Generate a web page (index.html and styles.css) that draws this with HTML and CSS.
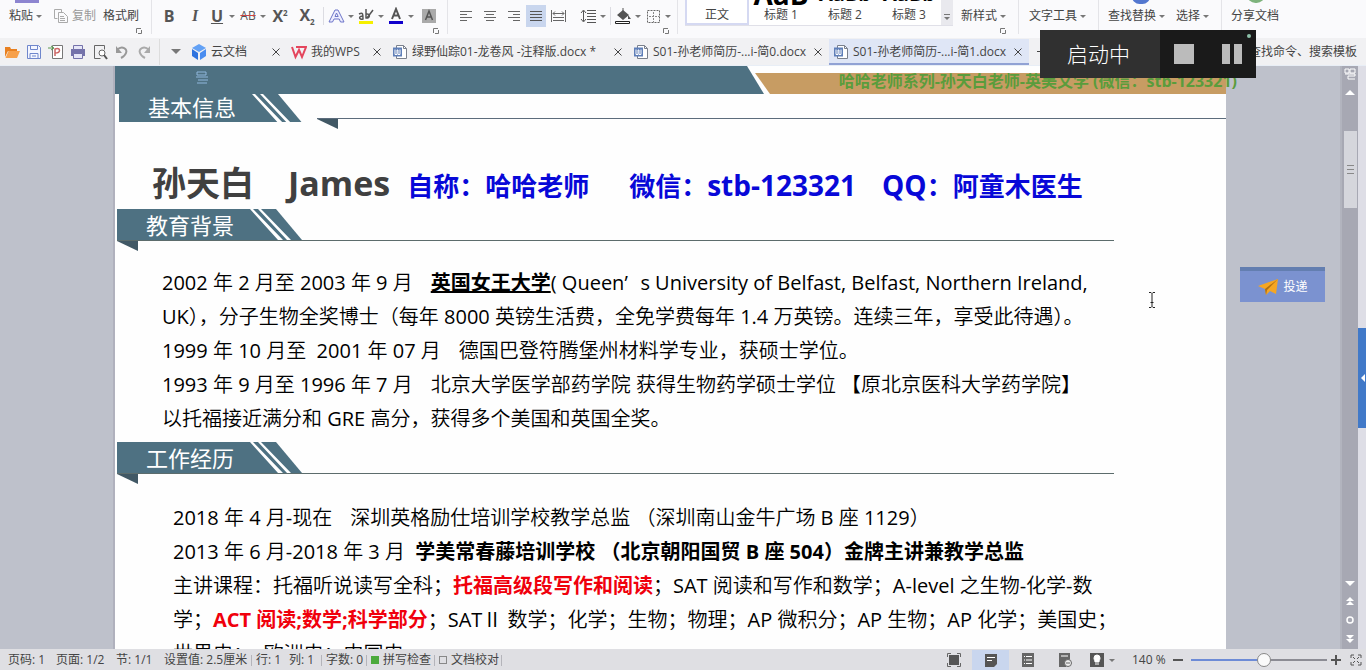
FILE: index.html
```
<!DOCTYPE html>
<html lang="zh-CN">
<head>
<meta charset="utf-8">
<title>S01-孙老师简历</title>
<link rel="stylesheet" href="styles.css">
</head>
<body>
<svg class="defs" aria-hidden="true">
  <symbol id="doc" viewBox="0 0 16 16"><path d="M4.500 1.500h7l3 3v10h-10z" fill="#fff" stroke="#7a808c"/><path d="M11.500 1.500v3h3" fill="none" stroke="#7a808c"/><path d="M1 3.500h9v9H1z" fill="#5f7fb8"/><path d="M3 5.500v5h2V6h1v4.500h2v-5" fill="none" stroke="#fff"/></symbol>
  <symbol id="close" viewBox="0 0 10 10"><path d="M1.500 1.500l7 7M8.500 1.500l-7 7" stroke="#444" fill="none"/></symbol>
  <symbol id="launch" viewBox="0 0 6 6"><path d="M.5 5V.5H5M5.500 2v3.500H2" stroke="#777" fill="none"/></symbol>
  <symbol id="flag" viewBox="0 0 186 31"><path d="M0 0h159l26 31H0z" fill="#4e7182"/><path d="M133 0h3l30 31h-5zM141 0h3l30 31h-4z" fill="#fff"/></symbol>
</svg>
<div class="app">
  <header class="ribbon">
    <div class="group clip">
      <div class="row">
        <button class="tool above purple">粘贴<i class="caret"></i></button>
        <button class="tool dim"><svg width="16" height="16" viewBox="0 0 16 16"><path d="M1.500 1.500h7v3M1.500 1.500v9h3M5.500 4.500h5l4 4v6h-9z M7 8.500h4M7 10.500h5M7 12.500h5" fill="none" stroke="#aaa"/></svg>复制</button>
        <button class="tool">格式刷</button>
      </div>
      <svg class="launch"><use href="#launch"/></svg>
    </div>
    <div class="group font">
      <div class="row">
        <button class="tool" aria-label="加粗"><b class="glyph">B</b></button>
        <button class="tool" aria-label="倾斜"><em class="glyph serif">I</em></button>
        <button class="tool" aria-label="下划线"><u class="glyph">U</u><i class="caret"></i></button>
        <button class="tool" aria-label="删除线"><s class="glyph small">AB</s><i class="caret"></i></button>
        <button class="tool" aria-label="上标"><span class="glyph">X<sup>2</sup></span></button>
        <button class="tool" aria-label="下标"><span class="glyph">X<sub>2</sub></span></button>
        <span class="sep"></span>
        <button class="tool" aria-label="文字效果"><svg width="20" height="18" viewBox="0 0 20 18"><path d="M3 15L9 3h3l6 12h-3.500l-1.300-3H8l-1.500 3zM9 9.500h3.200L10.500 6z" fill="#eef" stroke="#6c74c8"/></svg><i class="caret"></i></button>
        <button class="tool" aria-label="突出显示"><svg width="20" height="18" viewBox="0 0 20 18"><path d="M3 14h14v3H3z" fill="#f6f000"/><path d="M3 7c4-2 4 0 4 5-4 1-5-3 0-3M10 2v9c4 1 5-5 0-4M17 3l-6 8" fill="none" stroke="#555" stroke-width="1.500"/></svg><i class="caret"></i></button>
        <button class="tool" aria-label="字体颜色"><svg width="20" height="18" viewBox="0 0 20 18"><path d="M3 14h14v3H3z" fill="#10c"/><path d="M6 12l4-10 4 10M7.500 8.500h5" fill="none" stroke="#555" stroke-width="2"/></svg><i class="caret"></i></button>
        <button class="tool" aria-label="字符底纹"><svg width="20" height="18" viewBox="0 0 20 18"><path d="M3 2h14v14H3z" fill="#aaa"/><path d="M6.500 13l3.500-9 3.500 9M8 10h4" fill="none" stroke="#555" stroke-width="1.500"/></svg></button>
      </div>
      <svg class="launch"><use href="#launch"/></svg>
    </div>
    <div class="group para">
      <div class="row">
        <button class="tool" aria-label="左对齐"><svg width="20" height="18" viewBox="0 0 20 18"><path d="M4 4.500h12M4 7.500h7M4 10.500h12M4 13.500h7" stroke="#666"/></svg></button>
        <button class="tool" aria-label="居中"><svg width="20" height="18" viewBox="0 0 20 18"><path d="M4 4.500h12M6 7.500h8M4 10.500h12M6 13.500h8" stroke="#666"/></svg></button>
        <button class="tool" aria-label="右对齐"><svg width="20" height="18" viewBox="0 0 20 18"><path d="M4 4.500h12M9 7.500h7M4 10.500h12M9 13.500h7" stroke="#666"/></svg></button>
        <button class="tool on" aria-label="两端对齐"><svg width="20" height="18" viewBox="0 0 20 18"><path d="M4 4.500h12M4 7.500h12M4 10.500h12M4 13.500h12" stroke="#555"/></svg></button>
        <button class="tool" aria-label="分散对齐"><svg width="20" height="18" viewBox="0 0 20 18"><path d="M3.500 3v12M17.500 3v12M5 10.500h11M5 13.500h11M5 6.500h11M7 4.500l-2 2 2 2M14 4.500l2 2-2 2" stroke="#666" fill="none"/></svg></button>
        <button class="tool" aria-label="行距"><svg width="20" height="18" viewBox="0 0 20 18"><path d="M9 3.500h9M9 6.500h9M9 9.500h9M9 12.500h9M9 15.500h9M5.500 4v10M3 6l2.500-3L8 6M3 12l2.500 3L8 12" stroke="#555" fill="none"/></svg><i class="caret"></i></button>
        <span class="sep"></span>
        <button class="tool" aria-label="底纹颜色"><svg width="20" height="18" viewBox="0 0 20 18"><path d="M2.500 14.500h14v2h-14z" fill="#fff" stroke="#222"/><path d="M4 8l6-5 6 5-6 5zM15 8l3 4h-3z" fill="#555"/><path d="M10 1v5" stroke="#555"/></svg><i class="caret"></i></button>
        <button class="tool" aria-label="边框"><svg width="20" height="18" viewBox="0 0 20 18"><path d="M4.500 3.500h12v12h-12z" fill="none" stroke="#666" stroke-dasharray="2 1"/><path d="M10.500 5v10M6 9.500h10" stroke="#888" stroke-dasharray="2 1"/></svg><i class="caret"></i></button>
      </div>
      <svg class="launch"><use href="#launch"/></svg>
    </div>
    <div class="group styles">
      <div class="gallery">
        <button class="style chosen"><span>正文</span></button>
        <button class="style"><b class="big">AaB</b><span>标题 1</span></button>
        <button class="style"><b>AaBb</b><span>标题 2</span></button>
        <button class="style"><b>AaBb</b><span>标题 3</span></button>
        <button class="more" aria-label="更多样式"><i class="line"></i><i class="caret"></i></button>
      </div>
      <div class="newstyle">
        <button class="tool">新样式<i class="caret"></i></button>
        <svg class="launch"><use href="#launch"/></svg>
      </div>
    </div>
    <div class="group words"><div class="row"><button class="tool">文字工具<i class="caret"></i></button></div></div>
    <div class="group find"><div class="row">
      <button class="tool above blue">查找替换<i class="caret"></i></button>
      <button class="tool">选择<i class="caret"></i></button>
    </div></div>
    <div class="group share"><div class="row"><button class="tool above green">分享文档</button></div></div>
  </header>

  <nav class="tabs">
    <div class="quick">
      <button aria-label="打开"><svg width="16" height="16" viewBox="0 0 16 16"><path d="M1 3h5l1 2h6v2H4l-3 6z" fill="#e88020"/><path d="M4.500 7H16l-3 7H1.500z" fill="#f7a04a"/></svg></button>
      <button aria-label="保存"><svg width="16" height="16" viewBox="0 0 16 16"><path d="M1.500 1.500h11l2 2v11h-13z" fill="#f4f6ff" stroke="#6f86cc"/><path d="M4.500 1.500v4h7v-4M4 14V9.500h8V14M6 12h4" fill="none" stroke="#6f86cc"/></svg></button>
      <button aria-label="输出为PDF"><svg width="16" height="16" viewBox="0 0 16 16"><path d="M4.500 1.500h10v13h-10z" fill="#fff" stroke="#777"/><path d="M0 4h5M3 2l3 2-3 2" stroke="#5c9a50" fill="none"/><path d="M7 12V5c6-2 6 4 0 4" stroke="#c66" fill="none" stroke-width="1.500"/></svg></button>
      <button aria-label="打印"><svg width="16" height="16" viewBox="0 0 16 16"><path d="M1 5h14v7H1z" fill="#7472aa"/><path d="M3.500 1.500h9v4h-9zM3.500 9.500h9v5h-9z" fill="#e6e6f7" stroke="#7472aa"/></svg></button>
      <button aria-label="打印预览"><svg width="16" height="16" viewBox="0 0 16 16"><path d="M2.500 1.500h10v4M2.500 1.500v13h6" fill="none" stroke="#666"/><circle cx="10" cy="9" r="3" fill="#fff" stroke="#666"/><path d="M12 11l3 4" stroke="#555" stroke-width="2"/></svg></button>
      <button aria-label="撤销"><svg width="16" height="16" viewBox="0 0 16 16"><path d="M3 6c5-5 11-1 9 3-1 3-3 4-5 5" fill="none" stroke="#999" stroke-width="2"/><path d="M2 2v7h6z" fill="#999"/></svg></button>
      <button aria-label="恢复"><svg width="16" height="16" viewBox="0 0 16 16"><path d="M13 6C8 1 2 5 4 9c1 3 3 4 5 5" fill="none" stroke="#aaa" stroke-width="2"/><path d="M14 2v7H8z" fill="#aaa"/></svg></button>
    </div>
    <button class="drop" aria-label="自定义"><i class="caret wide"></i></button>
    <div class="tab cloud"><svg class="ic" viewBox="0 0 16 16"><path d="M8 0l7 4-7 4-7-4z" fill="#62a1f5"/><path d="M1 5l6 4v7l-6-4z" fill="#2f74df"/><path d="M15 5L9 9v7l6-4z" fill="#4a8df0"/></svg><a href="#">云文档</a><button aria-label="关闭"><svg><use href="#close"/></svg></button></div>
    <div class="tab wps"><svg class="ic" viewBox="0 0 16 16"><path d="M1 3l3.500 10L8 6l3 7 4-10H5" fill="none" stroke="#e4455c" stroke-width="2"/></svg><a href="#">我的WPS</a><button aria-label="关闭"><svg><use href="#close"/></svg></button></div>
    <div class="tab long"><svg class="ic"><use href="#doc"/></svg><a href="#">绿野仙踪01-龙卷风 -注释版.docx *</a><button aria-label="关闭"><svg><use href="#close"/></svg></button></div>
    <div class="tab file"><svg class="ic"><use href="#doc"/></svg><a href="#">S01-孙老师简历-...i-简0.docx</a><button aria-label="关闭"><svg><use href="#close"/></svg></button></div>
    <div class="tab file active"><svg class="ic"><use href="#doc"/></svg><a href="#">S01-孙老师简历-...i-简1.docx</a><button aria-label="关闭"><svg><use href="#close"/></svg></button></div>
    <button class="plus" aria-label="新建"><svg width="10" height="10" viewBox="0 0 10 10"><path d="M0 5.500h10M5.500 1v9" stroke="#444"/></svg></button>
    <input class="search" aria-label="搜索" value="查找命令、搜索模板">
  </nav>

  <main class="work">
    <article class="page">
      <div class="banner">
        <svg class="left" viewBox="0 0 652 28"><path d="M0 0h632l17 28H0z" fill="#4e7182"/></svg>
        <div class="tan"></div>
        <svg class="anchor" viewBox="0 0 14 14"><path d="M2 1h9v3H2zM1 6h12M3 9h10M2 12h10" fill="none" stroke="#8fb8dc"/></svg>
      </div>
      <div class="head first"><h2><svg><use href="#flag"/></svg><span>基本信息</span></h2><div class="rule"><i class="fold"></i></div></div>
      <h1><span class="cn">孙天白</span><span class="en">James</span><span class="c1">自称：哈哈老师</span><span class="c2">微信：<span class="latin">stb-123321</span></span><span class="c3"><span class="latin">QQ</span>：阿童木医生</span></h1>
      <div class="head"><h2><svg><use href="#flag"/></svg><span>教育背景</span></h2></div>
      <i class="fold"></i>
      <div class="text edu">
        <p>2002 年 2 月至 2003 年 9 月<span class="gap"></span><b><u>英国女王大学</u></b>( Queen<span class="quo">’</span>s University of Belfast, Belfast, Northern Ireland,</p>
        <p>UK），分子生物全奖博士（每年 8000 英镑生活费，全免学费每年 1.4 万英镑。连续三年，享受此待遇）。</p>
        <p>1999 年 10 月至  2001 年 07 月<span class="gap"></span>德国巴登符腾堡州材料学专业，获硕士学位。</p>
        <p>1993 年 9 月至 1996 年 7 月<span class="gap"></span>北京大学医学部药学院 获得生物药学硕士学位 【原北京医科大学药学院】</p>
        <p>以托福接近满分和 GRE 高分，获得多个美国和英国全奖。</p>
      </div>
      <div class="head"><h2><svg><use href="#flag"/></svg><span>工作经历</span></h2></div>
      <i class="fold"></i>
      <div class="text job">
        <p>2018 年 4 月-现在<span class="gap"></span>深圳英格励仕培训学校教学总监 （深圳南山金牛广场 B 座 1129）</p>
        <p>2013 年 6 月-2018 年 3 月  <b>学美常春藤培训学校 （北京朝阳国贸 B 座 504）金牌主讲兼教学总监</b></p>
        <p>主讲课程：托福听说读写全科；<b class="red">托福高级段写作和阅读</b>；SAT 阅读和写作和数学；A-level 之生物-化学-数</p>
        <p>学；<b class="red">ACT 阅读;数学;科学部分</b>；SATⅡ 数学；化学；生物；物理；AP 微积分；AP 生物；AP 化学；美国史；</p>
        <p>世界史；  欧洲史；中国史</p>
      </div>
    </article>
    <div class="mark">哈哈老师系列-孙天白老师-英美文学 (微信：stb-123321)</div>
    <button class="send"><svg width="22" height="18" viewBox="0 0 22 18"><path d="M1 8L21 1l-2 15-6-3-4 4-1-6z" fill="#f5a623"/><path d="M21 1L8 11l1 6 1-5z" fill="#b06f10"/></svg>投递</button>
    <svg class="cursor" viewBox="0 0 8 16"><path d="M1 .5h2l1 1 1-1h2M4 1.500v13M1 15.500h2l1-1 1 1h2M2.500 10.500h3" stroke="#222" fill="none"/></svg>
    <div class="scroll">
      <svg width="12" height="12" viewBox="0 0 12 12"><path d="M1 1h4v4H1zM6 1h5v4H6zM1 6h10v2H4v3h7" fill="none" stroke="#fff"/></svg>
      <svg class="up" width="10" height="6" viewBox="0 0 10 6"><path d="M0 6l5-5 5 5z" fill="#fff"/></svg>
      <div class="thumb"><i></i><i></i><i></i></div>
      <div class="ends">
        <svg width="10" height="6" viewBox="0 0 10 6"><path d="M0 0l5 5 5-5z" fill="#fff"/></svg>
        <svg width="10" height="10" viewBox="0 0 10 10"><path d="M1 5l4-4 4 4zM1 9l4-4 4 4z" fill="#fff"/></svg>
        <svg width="10" height="10" viewBox="0 0 10 10"><circle cx="5" cy="5" r="3" fill="none" stroke="#fff" stroke-width="1.500"/></svg>
        <svg width="10" height="10" viewBox="0 0 10 10"><path d="M1 1l4 4 4-4zM1 5l4 4 4-4z" fill="#fff"/></svg>
      </div>
    </div>
    <aside class="side"><button aria-label="展开"><svg width="5" height="8" viewBox="0 0 5 8"><path d="M5 0L1 4l4 4z" fill="#fff"/></svg></button></aside>
  </main>

  <footer class="status">
    <span class="s1">页码: 1</span><span class="s2">页面: 1/2</span><span class="s3">节: 1/1</span><span class="s4">设置值: 2.5厘米</span><span class="s5 bar">行: 1</span><span class="s6">列: 1</span><span class="s7 bar">字数: 0</span><span class="s8 bar"><i class="sq"></i>拼写检查</span><span class="s9 bar"><i class="sq open"></i>文档校对</span><span class="bar end"></span>
    <div class="views">
      <button aria-label="全屏"><svg width="16" height="16" viewBox="0 0 16 16"><path d="M1.500 5V1.500H5M11 1.500h3.500V5M14.500 11v3.500H11M5 14.500H1.500V11" fill="none" stroke="#666"/><path d="M3 3h10v10H3z" fill="#555"/></svg></button>
      <button class="on" aria-label="页面视图"><svg width="16" height="16" viewBox="0 0 16 16"><path d="M2 2h12v10l-3 3H2z" fill="#555"/><path d="M4 5.500h8M4 8.500h5" stroke="#fff"/></svg></button>
      <button aria-label="大纲"><svg width="16" height="16" viewBox="0 0 16 16"><path d="M2 1h12v14H2z" fill="#666"/><path d="M4 4.500h1M6 4.500h6M4 8h1M6 8h6M4 11.500h1M6 11.500h6" stroke="#fff"/></svg></button>
      <button aria-label="Web 版式"><svg width="16" height="16" viewBox="0 0 16 16"><path d="M2 1h11v6l-4 8H2z" fill="#666"/><path d="M4 4h7" stroke="#fff"/><circle cx="11" cy="11" r="3.500" fill="#eee" stroke="#666"/><path d="M9 11h4" stroke="#666"/></svg></button>
      <button aria-label="护眼模式"><svg width="16" height="16" viewBox="0 0 16 16"><path d="M1 1h14v14H1z" fill="#555"/><path d="M5 6a3 3 0 1 1 6 0c0 2-1 2-1 4H6c0-2-1-2-1-4zM6 12h4" fill="#fff" stroke="#fff"/></svg><i class="caret"></i></button>
    </div>
    <label class="pct" for="zoom">140 %</label>
    <button class="step" aria-label="缩小"><svg width="10" height="10" viewBox="0 0 10 10"><path d="M0 5h10" stroke="#555" stroke-width="2"/></svg></button>
    <input id="zoom" type="range" min="0" max="100" value="54">
    <button class="step" aria-label="放大"><svg width="10" height="10" viewBox="0 0 10 10"><path d="M0 5h10M5 0v10" stroke="#555" stroke-width="2"/></svg></button>
    <button class="step" aria-label="适应"><svg width="12" height="12" viewBox="0 0 12 12"><path d="M1 4V1h3M8 1h3v3M11 8v3H8M4 11H1V8M3 3l2 2M9 3L7 5M3 9l2-2M9 9L7 7" fill="none" stroke="#555"/></svg></button>
  </footer>
</div>
<div class="recorder"><span>启动中</span><div><button aria-label="停止"><svg width="20" height="20"><path d="M0 0h20v20H0z" fill="#bbb"/></svg></button><button aria-label="暂停"><svg width="20" height="20"><path d="M0 0h8v20H0zM12 0h8v20h-8z" fill="#bbb"/></svg></button><i></i></div></div>
</body>
</html>
```
FILE: styles.css
```
*, *::before { box-sizing: border-box; }
body { margin: 0; font: 12px/16px "Open Sans", "Noto Sans CJK SC", sans-serif; color: #444; }
button { border: 0; padding: 0; background: none; font: inherit; color: inherit; }
.defs { position: absolute; width: 0; height: 0; }
.app { display: flex; flex-direction: column; height: 100vh; overflow: hidden; background: #fafafa; }

.ribbon { display: flex; flex: none; height: 38px; background: #fafafc; overflow: hidden; }
.group { display: flex; flex-direction: column; border-right: 1px solid #e4e4e8; height: 34px; flex: none; }
.row { display: grid; height: 28px; padding-top: 4px; align-items: center; }
.launch { width: 6px; height: 6px; align-self: flex-end; margin-right: 8px; flex: none; }
.tool { display: flex; align-items: center; gap: 3px; height: 22px; white-space: nowrap; position: relative; }
.tool svg { flex: none; }
.dim { color: #999; }
.on { background: #c9d6ee; }
.caret { border: 3px solid transparent; border-top-color: #777; border-bottom: 0; flex: none; }
.caret.wide { border-width: 5px 5px 0; }
.sep { width: 1px; height: 18px; background: #dcdce2; }
.clip { width: 152px; }
.clip .row { grid-template-columns: 44px 50px 40px; padding-left: 9px; }
.clip .launch { margin-right: 9px; }
.above::before { content: ""; position: absolute; top: -7px; left: 6px; width: 24px; height: 5px; background: #8d85d0; }
.above.blue::before { left: 24px; width: 18px; top: -16px; height: 15px; border: 4px solid #5377cf; border-radius: 8px; background: none; }
.above.green::before { left: 16px; width: 18px; top: -19px; height: 17px; border-radius: 9px; background: #7eb37c; }
.font { width: 296px; }
.font .row { grid-template-columns: 26px 22px 31px 32px 27px 26px 3px 30px 30px 33px 28px; padding-left: 7px; }
.font .tool, .para .tool { gap: 2px; }
.glyph { width: 20px; text-align: center; font: bold 16px/18px "Open Sans", sans-serif; color: #555; flex: none; }
.glyph sup, .glyph sub { font-size: 8px; line-height: 8px; }
.serif { font-family: "Liberation Serif", serif; font-style: italic; }
.small { font-size: 12px; font-weight: 400; text-decoration-color: #c44; }
.para { width: 230px; }
.para .row { grid-template-columns: 24px 24px 22px 22px 30px 32px 3px 30px 34px; padding-left: 8px; }
.para .on { width: 20px; }
.styles { flex-direction: row; width: 341px; gap: 8px; padding-left: 7px; }
.gallery { display: flex; height: 26px; border-bottom: 1px solid #e0e0e8; background: #fff; }
.style { display: flex; flex-direction: column; justify-content: flex-end; align-items: center; width: 64px; padding-bottom: 2px; overflow: hidden; white-space: nowrap; }
.style b { font-size: 20px; line-height: 26px; color: #000; flex: none; }
.style b.big { font-size: 28px; line-height: 26px; }
.style span { flex: none; }
.chosen { border: 2px solid #d5d9f2; border-top: 0; padding-bottom: 0; }
.more { width: 12px; background: #e9e9ee; display: flex; flex-direction: column; align-items: center; justify-content: flex-end; gap: 2px; padding-bottom: 5px; }
.line { width: 6px; height: 1px; background: #777; }
.newstyle { display: flex; flex-direction: column; padding-top: 5px; }
.newstyle .launch { margin: 1px 0 0; }
.words { width: 80px; }
.words .row { padding-left: 10px; }
.find { width: 123px; }
.find .row { grid-template-columns: 68px 40px; padding-left: 9px; }
.share { flex: 1; border: 0; }
.share .row { padding-left: 9px; }

.tabs { display: flex; align-items: center; height: 28px; flex: none; background: #f1f1f3; border-bottom: 1px solid #e8eef6; white-space: nowrap; }
.quick { display: flex; gap: 6px; padding-left: 4px; width: 160px; height: 26px; align-items: center; border-right: 1px solid #ddd; flex: none; }
.quick svg { display: block; }
.drop { width: 31px; display: flex; justify-content: center; flex: none; }
.tab { display: flex; align-items: center; height: 26px; gap: 4px; flex: none; padding-top: 1px; }
.tab a { color: #444; text-decoration: none; flex: 1; overflow: hidden; }
.tab .ic { width: 16px; height: 16px; flex: none; }
.tab button svg { display: block; width: 10px; height: 10px; }
.cloud { width: 90px; }
.wps { width: 91px; margin-left: 10px; }
.long { width: 231px; margin-left: 10px; }
.file { width: 200px; padding: 1px 5px 0 4px; margin-left: 6px; }
.file a { flex: none; width: 156px; }
.file.active { background: #dfe6f6; box-shadow: inset 0 -2px 0 #91a2d4; margin-left: 0; }
.plus { margin-left: 8px; }
.search { margin-left: auto; margin-right: 9px; width: 110px; padding: 0; border: 0; background: none; font: inherit; color: #444; text-align: right; }

.work { position: relative; display: flex; flex: 1; min-height: 0; background: #bec1cb; overflow: hidden; }
.page { flex: 1; min-width: 0; margin: 0 114px 0 115px; background: #fefefe; box-shadow: -2px 0 0 #b0b1bd; overflow: hidden; }
.banner { display: flex; align-items: flex-end; height: 28px; position: relative; }
.banner .left { width: 652px; height: 28px; margin-right: -12px; flex: none; }
.tan { flex: 1; height: 21px; background: #c79c63; clip-path: polygon(0 0, 100% 0, 100% 100%, 15px 100%); }
.anchor { position: absolute; left: 80px; top: 5px; width: 14px; height: 14px; }
.head { display: flex; height: 32px; margin: 0 112px 0 2px; border-bottom: 1px solid #5c6c6c; }
.head h2 { position: relative; margin: 0; width: 186px; height: 31px; padding-left: 29px; font-size: 22px; line-height: 32px; font-weight: 400; color: #fff; }
.head h2 svg { position: absolute; left: 0; top: 0; width: 186px; height: 31px; }
.head h2 span { position: relative; }
.head.first { height: 28px; border: 0; margin: 0 0 0 4px; }
.first h2 { height: 28px; line-height: 26px; overflow: hidden; }
.first .rule { flex: 1; margin: 24px 0 0 12px; border-top: 1px solid #5c6c7c; height: 1px; }
.fold { display: block; width: 21px; height: 10px; margin-left: 2px; background: #415865; clip-path: polygon(0 0, 100% 0, 100% 100%); }
.rule .fold { margin-left: 0; }
h1 { display: flex; align-items: baseline; margin: 0; height: 87px; padding: 36px 0 0 37px; font-size: 26px; line-height: 50px; color: #0808d8; white-space: nowrap; text-spacing-trim: space-all; }
.cn, .en { font-size: 34px; color: #404040; }
.latin { font-size: 28px; }
.en { margin-left: 34px; }
.c1 { margin-left: 17px; }
.c2 { margin-left: 40px; }
.c3 { margin-left: 26px; }
.text { font-family: "Open Sans", "Noto Sans CJK SC DemiLight", "Noto Sans CJK SC Light", "Noto Sans CJK SC", sans-serif; font-size: 20px; line-height: 34px; color: #000; font-weight: 400; }
.text p { margin: 0; height: 34px; white-space: pre; }
.text b { font-family: "Open Sans", "Noto Sans CJK SC", sans-serif; font-weight: 700; }
.edu { padding: 15px 0 6px 47px; }
.job { padding: 17px 0 0 58px; }
.gap { display: inline-block; width: 18px; }
.quo { display: inline-block; width: 16px; }
.text .red { color: #f0000c; }
.mark { position: absolute; right: 129px; top: 3px; font-size: 16px; line-height: 24px; font-weight: 700; color: #5a9c3c; white-space: nowrap; }
.send { position: absolute; right: 41px; top: 201px; width: 85px; height: 35px; background: #7b92d0; border-top: 4px solid #637eb0; color: #fff; display: flex; align-items: center; justify-content: center; gap: 4px; }
.cursor { position: absolute; right: 210px; top: 226px; width: 8px; height: 16px; }
.scroll { width: 18px; background: #a7a8b3; display: flex; flex-direction: column; align-items: center; padding-top: 2px; border-left: 2px solid #b2b4be; flex: none; }
.scroll svg { flex: none; }
.up { margin-top: 9px; }
.thumb { width: 13px; height: 77px; margin-top: 36px; background: #d5d6dc; display: flex; flex-direction: column; justify-content: center; align-items: center; gap: 3px; flex: none; }
.thumb i { width: 7px; height: 1px; background: #888; }
.ends { margin-top: auto; padding-bottom: 5px; display: flex; flex-direction: column; gap: 9px; }
.side { width: 8px; background: #dedee6; padding-top: 262px; flex: none; }
.side button { width: 8px; height: 100px; background: #4179c8; display: flex; align-items: center; justify-content: center; }

.status { display: flex; align-items: center; height: 21px; flex: none; background: #dfdfe3; white-space: nowrap; padding: 1px 4px 0 8px; }
.status > span { flex: none; display: flex; align-items: center; gap: 4px; position: relative; }
.bar::before { content: ""; position: absolute; left: -5px; top: 3px; width: 1px; height: 11px; background: #b4b4ba; }
.end { height: 16px; }
.s1 { width: 48px; }
.s2 { width: 60px; }
.s3 { width: 48px; }
.s4 { width: 92px; }
.s5 { width: 33px; }
.s6 { width: 37px; }
.s7 { width: 45px; }
.s8 { width: 68px; }
.s9 { width: 67px; }
.sq { width: 8px; height: 8px; background: #4caa3c; }
.sq.open { background: none; border: 1px solid #888; }
.views { margin-left: auto; display: flex; height: 20px; }
.views button { display: flex; align-items: center; justify-content: center; gap: 4px; width: 37px; height: 20px; }
.pct { width: 40px; margin-left: 12px; }
.step { width: 12px; display: flex; justify-content: center; flex: none; }
.step + .step { margin-left: 8px; }
#zoom { appearance: none; width: 136px; height: 14px; margin: 0 3px 0 7px; background: linear-gradient(90deg, #6d8bd6 54%, #8c8c94 54%) center / 100% 2px no-repeat; }
#zoom::-webkit-slider-thumb { appearance: none; width: 14px; height: 14px; border-radius: 7px; background: #fafafa; border: 1px solid #888; }

.recorder { position: absolute; top: 30px; right: 110px; width: 216px; height: 48px; display: flex; background: #303030; color: #fff; }
.recorder span { width: 120px; padding-left: 27px; font-size: 21px; line-height: 48px; font-weight: 300; }
.recorder div { position: relative; flex: 1; display: flex; align-items: center; justify-content: center; gap: 28px; background: #1a1a1a; }
.recorder svg { display: block; }
.recorder i { position: absolute; right: 5px; top: 4px; width: 4px; height: 4px; border-radius: 2px; background: #8cc0a8; }
```
